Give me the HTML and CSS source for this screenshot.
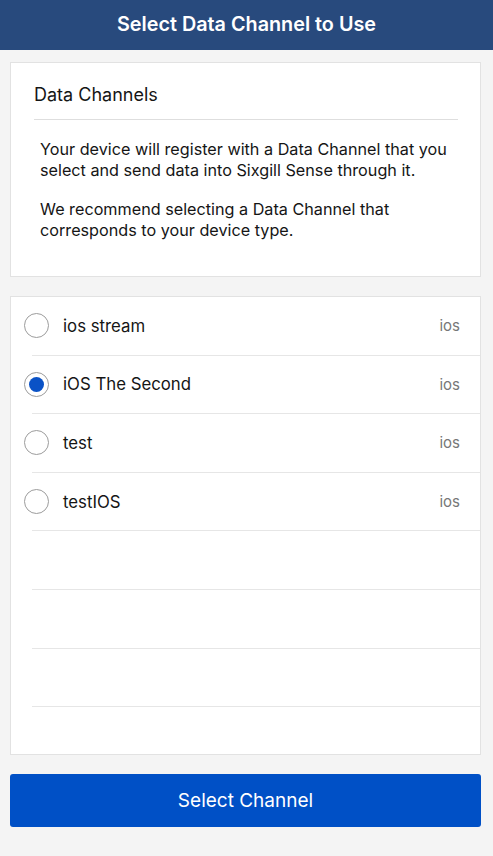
FILE: index.html
```html
<!DOCTYPE html>
<html>
<head>
<meta charset="utf-8">
<link rel="stylesheet" href="styles.css">
</head>
<body>
<header class="topbar">Select Data Channel to Use</header>
<main class="content">
  <section class="card intro">
    <h2 class="intro-title">Data Channels</h2>
    <div class="intro-text">
      <p>Your device will register with a Data Channel that you select and send data into Sixgill Sense through it.</p>
      <p>We recommend selecting a Data Channel that corresponds to your device type.</p>
    </div>
  </section>
  <section class="card list">
    <div class="row"><span class="radio"></span><span class="name">ios stream</span><span class="type">ios</span></div>
    <div class="row"><span class="radio checked"></span><span class="name">iOS The Second</span><span class="type">ios</span></div>
    <div class="row"><span class="radio"></span><span class="name">test</span><span class="type">ios</span></div>
    <div class="row"><span class="radio"></span><span class="name">testIOS</span><span class="type">ios</span></div>
    <div class="row empty"></div>
    <div class="row empty"></div>
    <div class="row empty"></div>
  </section>
  <button class="select-btn">Select Channel</button>
</main>
</body>
</html>
```
FILE: styles.css
```css
* { box-sizing: border-box; }
html, body { margin: 0; padding: 0; }
body {
  width: 493px;
  height: 856px;
  background: #f4f4f4;
  font-family: Inter, "Liberation Sans", sans-serif;
  color: #151515;
  overflow: hidden;
}
.topbar {
  height: 50px;
  background: #284a7d;
  color: #fff;
  font-size: 19.8px;
  font-weight: 600;
  display: flex;
  align-items: center;
  justify-content: center;
  padding-bottom: 3px;
}
.content {
  padding: 12px 12px 0 10px;
  display: flex;
  flex-direction: column;
}
.card {
  background: #fff;
  border: 1px solid #e2e2e2;
}
.intro {
  height: 215px;
  padding: 0 22px 0 23px;
}
.intro-title {
  margin: 0;
  font-size: 18px;
  font-weight: 400;
  height: 57px;
  padding-top: 21px;
  border-bottom: 1px solid #dedede;
}
.intro-text {
  padding: 19px 0 0 6px;
  font-size: 16.2px;
  line-height: 20.5px;
}
.intro-text p { margin: 0 0 19px 0; }
.list {
  margin-top: 19px;
  height: 459px;
}
.row {
  height: 58.6px;
  display: flex;
  align-items: center;
  border-bottom: 1px solid #e6e6e6;
  margin-left: 21px;
  padding-right: 20px;
}
.radio {
  width: 25px;
  height: 25px;
  border-radius: 50%;
  border: 1px solid #9c9c9c;
  margin-left: -8px;
  flex: none;
  display: flex;
  align-items: center;
  justify-content: center;
}
.radio.checked::after {
  content: "";
  width: 15px;
  height: 15px;
  border-radius: 50%;
  background: #0a52c6;
}
.name {
  margin-left: 14px;
  font-size: 16.8px;
  flex: 1;
}
.type {
  font-size: 15px;
  color: #777;
}
.select-btn {
  margin-top: 19px;
  height: 53px;
  width: 471px;
  border: none;
  border-radius: 3px;
  background: #0050c6;
  color: #fff;
  font-family: Inter, "Liberation Sans", sans-serif;
  font-size: 19px;
  font-weight: 400;
}
```
